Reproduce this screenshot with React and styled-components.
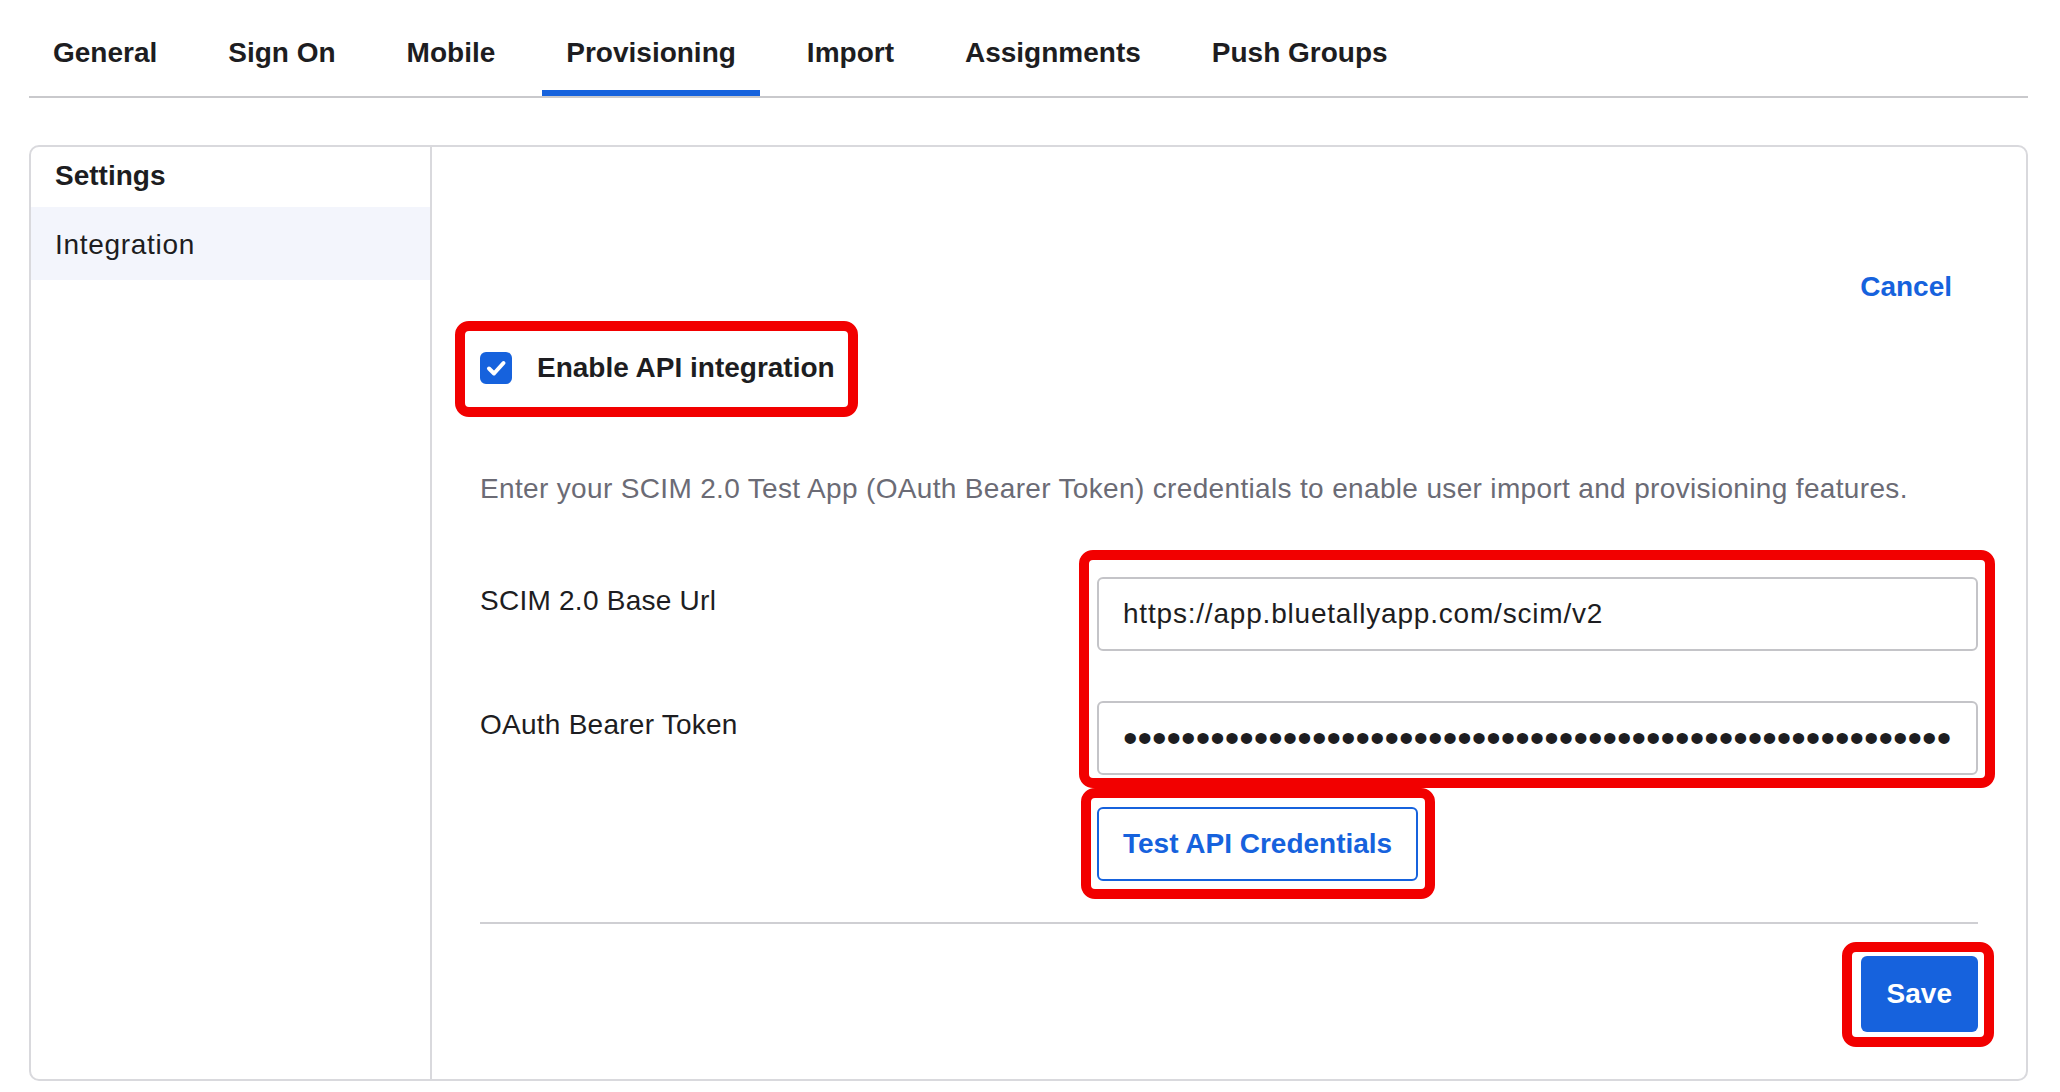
import React from "react";
import styled, { createGlobalStyle } from "styled-components";

const FONT = `"Liberation Sans", Arial, sans-serif`;
const BLUE = "#1662dd";
const INK = "#1d1d21";

const GlobalStyle = createGlobalStyle`
  html, body { margin: 0; padding: 0; background: #fff; }
  body { font-family: ${FONT}; color: ${INK}; }
  *, *::before, *::after { box-sizing: border-box; }
`;

const Page = styled.div`
  width: 2060px;
  height: 1092px;
  padding: 0 32px 11px 29px;
  display: flex;
  flex-direction: column;
`;

const TabBar = styled.nav`
  display: flex;
  gap: 23px;
  border-bottom: 2px solid #c9c9cc;
`;

const Tab = styled.button`
  height: 96px;
  padding: 33px 24px 23px;
  border: 0;
  background: none;
  font: 700 28px/40px ${FONT};
  color: ${INK};
  cursor: pointer;
  box-shadow: ${(p) => (p.$active ? `inset 0 -6px 0 ${BLUE}` : "none")};
`;

const Panel = styled.section`
  margin-top: 47px;
  flex: 1;
  display: grid;
  grid-template-columns: 401px 1fr;
  border: 2px solid #d9d9dd;
  border-radius: 10px;
  overflow: hidden;
`;

const Sidebar = styled.aside`
  border-right: 2px solid #d9d9dd;
  display: flex;
  flex-direction: column;
`;

const SideHeading = styled.h2`
  margin: 0;
  padding: 9px 24px 11px;
  font: 700 28px/40px ${FONT};
  color: ${INK};
`;

const SideItem = styled.a`
  display: flex;
  align-items: center;
  height: 73px;
  padding: 2px 24px 0;
  background: ${(p) => (p.$active ? "#f3f5fc" : "transparent")};
  font: 400 28px/40px ${FONT};
  letter-spacing: 0.7px;
  color: ${INK};
  text-decoration: none;
`;

const Content = styled.div`
  padding: 120px 48px 47px;
  display: flex;
  flex-direction: column;
`;

const HeaderActions = styled.div`
  display: flex;
  justify-content: flex-end;
`;

const LinkButton = styled.button`
  height: 40px;
  padding: 0 26px;
  border: 0;
  background: none;
  font: 700 28px/40px ${FONT};
  color: ${BLUE};
  cursor: pointer;
`;

const Marked = styled.div`
  position: relative;
  display: flex;
  align-self: ${(p) => p.$align || "stretch"};
  &::after {
    content: "";
    position: absolute;
    top: ${(p) => p.$t}px;
    right: ${(p) => p.$r}px;
    bottom: ${(p) => p.$b}px;
    left: ${(p) => p.$l}px;
    border: 10px solid #f20000;
    border-radius: 14px;
    pointer-events: none;
  }
`;

const CheckRow = styled.label`
  display: flex;
  align-items: center;
  gap: 25px;
  height: 48px;
  font: 700 28px/40px ${FONT};
  color: ${INK};
  cursor: pointer;
`;

const CheckBox = styled.span`
  width: 32px;
  height: 32px;
  border-radius: 6px;
  background: ${BLUE};
  display: flex;
  align-items: center;
  justify-content: center;
`;

const Description = styled.p`
  margin: 77px 0 0;
  font: 400 28px/40px ${FONT};
  letter-spacing: 0.34px;
  color: #6b6b75;
`;

const FieldGrid = styled.div`
  margin-top: 68px;
  display: grid;
  grid-template-columns: 617px 1fr;
  grid-template-rows: 74px 50px 74px 32px 74px;
`;

const FieldLabel = styled.label`
  grid-column: 1;
  grid-row: ${(p) => p.$row};
  padding-top: 4px;
  font: 400 28px/40px ${FONT};
  letter-spacing: 0.25px;
  color: ${INK};
`;

const TextInput = styled.input`
  grid-column: 2;
  grid-row: ${(p) => p.$row};
  width: 100%;
  height: 74px;
  border: 2px solid #c4c4c8;
  border-radius: 6px;
  padding: 0 24px;
  background: #fff;
  font: 400 ${(p) => (p.$masked ? "41.5px" : "28px")} ${FONT};
  letter-spacing: ${(p) => (p.$masked ? "0" : "0.8px")};
  color: ${INK};
  outline: none;
`;

const FieldMark = styled.div`
  grid-column: 2;
  grid-row: 1 / 4;
  margin: -27px -17px -13px -18px;
  border: 10px solid #f20000;
  border-radius: 14px;
  pointer-events: none;
  z-index: 1;
`;

const ButtonCell = styled.div`
  grid-column: 2;
  grid-row: 5;
  display: flex;
  justify-content: flex-start;
`;

const OutlineButton = styled.button`
  height: 74px;
  padding: 0 24px;
  border: 2px solid ${BLUE};
  border-radius: 6px;
  background: #fff;
  font: 700 28px/40px ${FONT};
  color: ${BLUE};
  cursor: pointer;
`;

const Divider = styled.hr`
  margin: 41px 0 0;
  border: 0;
  height: 2px;
  background: #cfcfd3;
`;

const Footer = styled.div`
  margin-top: 32px;
  display: flex;
  justify-content: flex-end;
`;

const PrimaryButton = styled.button`
  height: 76px;
  padding: 0 26px;
  border: 0;
  border-radius: 6px;
  background: ${BLUE};
  font: 700 28px/40px ${FONT};
  color: #fff;
  cursor: pointer;
`;

const tabs = ["General", "Sign On", "Mobile", "Provisioning", "Import", "Assignments", "Push Groups"];

export default function App() {
  return (
    <>
      <GlobalStyle />
      <Page>
        <TabBar>
          {tabs.map((t) => (
            <Tab key={t} $active={t === "Provisioning"}>
              {t}
            </Tab>
          ))}
        </TabBar>
        <Panel>
          <Sidebar>
            <SideHeading>Settings</SideHeading>
            <SideItem href="#" $active>
              Integration
            </SideItem>
          </Sidebar>
          <Content>
            <HeaderActions>
              <LinkButton>Cancel</LinkButton>
            </HeaderActions>
            <Marked $align="flex-start" $t={-23} $r={-23} $b={-25} $l={-25} style={{ marginTop: 37 }}>
              <CheckRow>
                <CheckBox>
                  <svg width="32" height="32" viewBox="0 0 32 32">
                    <polyline
                      points="9,16.5 14,21.5 23.5,11"
                      fill="none"
                      stroke="#fff"
                      strokeWidth="4"
                      strokeLinecap="round"
                      strokeLinejoin="round"
                    />
                  </svg>
                </CheckBox>
                Enable API integration
              </CheckRow>
            </Marked>
            <Description>
              Enter your SCIM 2.0 Test App (OAuth Bearer Token) credentials to enable user import and provisioning features.
            </Description>
            <FieldGrid>
              <FieldLabel htmlFor="scim-url" $row={1}>
                SCIM 2.0 Base Url
              </FieldLabel>
              <TextInput id="scim-url" $row={1} readOnly value="https://app.bluetallyapp.com/scim/v2" />
              <FieldLabel htmlFor="scim-token" $row={3}>
                OAuth Bearer Token
              </FieldLabel>
              <TextInput id="scim-token" $row={3} $masked type="password" readOnly value={"x".repeat(57)} />
              <FieldMark />
              <ButtonCell>
                <Marked $t={-19} $r={-17} $b={-18} $l={-16}>
                  <OutlineButton>Test API Credentials</OutlineButton>
                </Marked>
              </ButtonCell>
            </FieldGrid>
            <Divider />
            <Footer>
              <Marked $t={-14} $r={-16} $b={-15} $l={-19}>
                <PrimaryButton>Save</PrimaryButton>
              </Marked>
            </Footer>
          </Content>
        </Panel>
      </Page>
    </>
  );
}
